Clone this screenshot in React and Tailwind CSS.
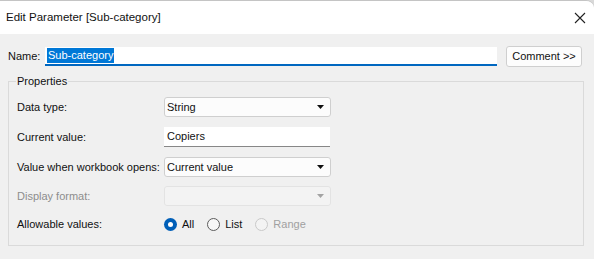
import React from 'react';

// Win11-style "Edit Parameter" dialog
const Caret = ({ disabled }) => (
  <svg width="7" height="4" viewBox="0 0 7 4">
    <path d="M0 0h7L3.5 4z" fill={disabled ? '#a3a3a3' : '#111'} />
  </svg>
);

const Select = ({ value, disabled }) => (
  <div
    className={`flex h-[20px] w-[167px] items-center justify-between rounded-[3px] border pl-[2px] pr-[6px] ${
      disabled ? 'border-[#e3e3e3] bg-[#f3f3f3]' : 'border-[#cfcfcf] bg-[#fcfcfc]'
    }`}
  >
    <span className="text-[#111]">{value}</span>
    <Caret disabled={disabled} />
  </div>
);

const Radio = ({ label, checked, disabled }) => (
  <div className="flex items-center gap-[5px]">
    {checked ? (
      <span className="flex h-[13px] w-[13px] items-center justify-center rounded-full bg-[#005fb8]">
        <span className="h-[5px] w-[5px] rounded-full bg-white" />
      </span>
    ) : (
      <span
        className={`h-[13px] w-[13px] rounded-full border ${
          disabled ? 'border-[#c9c9c9] bg-[#f3f3f3]' : 'border-[#5c5c5c] bg-[#f7f7f7]'
        }`}
      />
    )}
    <span className={disabled ? 'text-[#a0a0a0]' : 'text-[#111]'}>{label}</span>
  </div>
);

const Row = ({ label, disabled, className = '', children }) => (
  <div className={`flex h-[20px] items-center ${className}`}>
    <div className={`w-[147px] ${disabled ? 'text-[#8d8d8d]' : 'text-[#111]'}`}>{label}</div>
    {children}
  </div>
);

export default function App() {
  return (
    <div className="h-[259px] w-[594px] bg-[#d9d9d9] font-['Liberation_Sans',Arial,sans-serif] text-[11px] leading-none">
      <div className="flex h-full flex-col overflow-hidden rounded-tr-[8px] border-t border-[#c4c4c4] bg-[#f0f0f0]">
        {/* title bar */}
        <div className="flex h-[33px] items-center justify-between bg-white pl-[6px] pr-[7px]">
          <span className="text-[11.5px] text-[#111]">Edit Parameter [Sub-category]</span>
          <svg width="12" height="12" viewBox="0 0 12 12" className="mr-[1px]">
            <path d="M1 1l10 10M11 1L1 11" stroke="#222" strokeWidth="1.1" />
          </svg>
        </div>

        {/* name row */}
        <div className="mt-[12px] flex items-center pl-[8px] pr-[12px]">
          <span className="w-[37px] text-[#111]">Name:</span>
          <div className="flex h-[19px] w-[452px] items-center border-b-2 border-[#0067c0] bg-white pl-[2px]">
            <span className="bg-[#0078d7] px-[1px] py-[2px] text-white">Sub-category</span>
          </div>
          <div className="ml-[9px] flex h-[21px] w-[76px] items-center justify-center rounded-[3px] border border-[#cfcfcf] bg-[#fdfdfd] text-[#111]">
            Comment &gt;&gt;
          </div>
        </div>

        {/* properties group */}
        <fieldset className="mx-[8px] mt-[9px] h-[170px] w-[576px] border border-[#dadada] pl-[8px] pt-[10px]">
          <legend className="ml-[-1px] px-[1px] text-[#111]">Properties</legend>
          <div className="flex flex-col gap-[10px]">
            <Row label="Data type:">
              <Select value="String" />
            </Row>
            <Row label="Current value:">
              <div className="flex h-[20px] w-[166px] items-center border-b border-[#878787] bg-white pl-[3px] text-[#111]">
                Copiers
              </div>
            </Row>
            <Row label="Value when workbook opens:">
              <Select value="Current value" />
            </Row>
            <Row label="Display format:" disabled className="-mt-[1px]">
              <Select value="" disabled />
            </Row>
            <Row label="Allowable values:" className="-mt-[2px]">
              <div className="flex items-center gap-[13px]">
                <Radio label="All" checked />
                <Radio label="List" />
                <Radio label="Range" disabled />
              </div>
            </Row>
          </div>
        </fieldset>
      </div>
    </div>
  );
}
